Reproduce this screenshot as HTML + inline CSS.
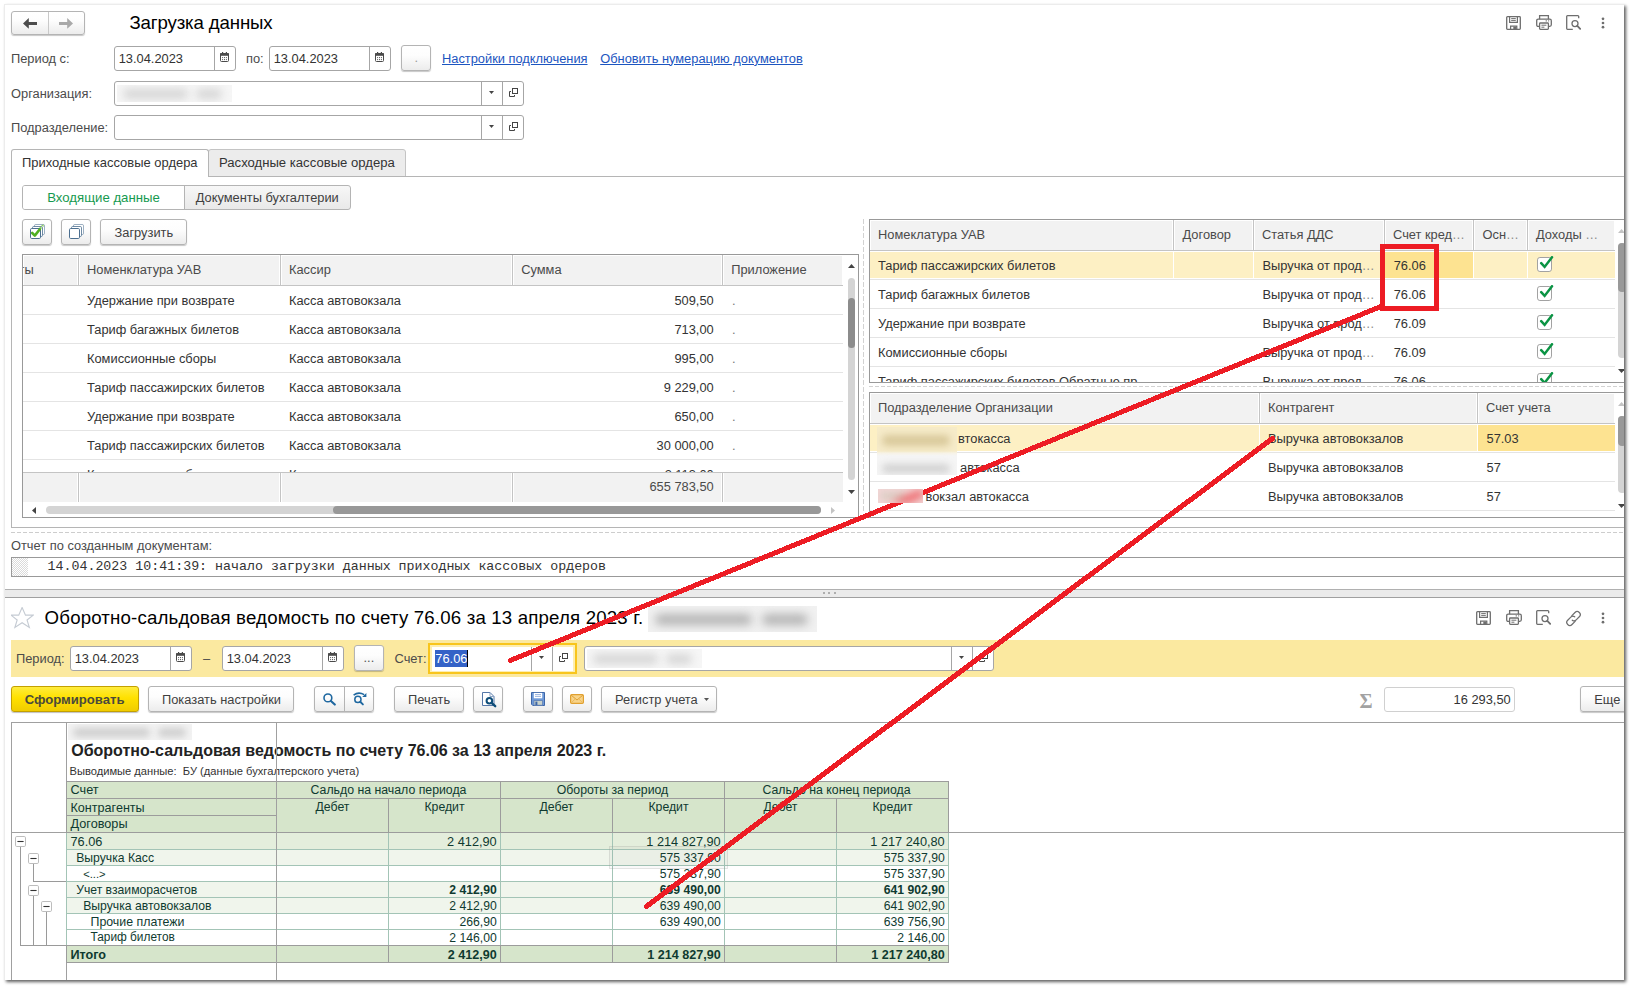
<!DOCTYPE html><html lang='ru'><head><meta charset='utf-8'><title>Загрузка данных</title><style>
html,body{margin:0;padding:0;background:#fff;}
body{width:1633px;height:989px;overflow:hidden;position:relative;font-family:'Liberation Sans',sans-serif;color:#333;}
#frame{position:absolute;left:4px;top:4px;width:1620px;height:976px;background:#fff;box-shadow:2px 2px 3px 0 rgba(0,0,0,.62);border-top:1px solid #ececec;border-left:1px solid #ececec;box-sizing:border-box;}
#c{position:absolute;left:0;top:0;width:1633px;height:989px;clip-path:inset(5px 9px 9px 5px);}
#c div, #c svg, #c2 div, #c2 svg{position:absolute;box-sizing:border-box;}
.t{white-space:pre;}
.inp{background:#fff;border:1px solid #a6a6a6;border-radius:3px;}
.btn{border:1px solid #b4b4b4;border-radius:3px;background:linear-gradient(#fff 0%,#fdfdfd 40%,#ececec 100%);box-shadow:0 1px 1px rgba(0,0,0,.22);}
.vl{width:1px;background:#a6a6a6;}
.hl{height:1px;background:#a6a6a6;}
.lnk{color:#1c55c0;text-decoration:underline;}
.hdr{background:#f2f2f2;}
</style></head><body>
<div id='frame'></div><div id='c'>
<div class='btn' style="left:11px;top:11px;width:74px;height:24px;"></div>
<div style="left:48px;top:12px;width:1px;height:22px;background:#c9c9c9;"></div>
<svg style="left:23px;top:18px;" width="14" height="11" viewBox="0 0 14 11"><path d='M0 5.4L5.8 0V3.9H14V6.9H5.8V10.8Z' fill='#4d4d4d'/></svg>
<svg style="left:59px;top:18px;" width="14" height="11" viewBox="0 0 14 11"><path d='M14 5.4L8.2 0V3.9H0V6.9H8.2V10.8Z' fill='#a9a9a9'/></svg>
<div class='t' style="top:11.13px;line-height:24px;font-size:18.67px;color:#000;letter-spacing:-0.15px;left:129.50px;">Загрузка данных</div>
<svg style="left:1506px;top:16px;" width="15" height="14" viewBox="0 0 15 14"><path d='M1.5 0.7H13.5Q14.3 0.7 14.3 1.5V12.5Q14.3 13.3 13.5 13.3H1.5Q0.7 13.3 0.7 12.5V1.5Q0.7 0.7 1.5 0.7Z' fill='none' stroke='#6e6e6e' stroke-width='1.3'/><path d='M3.6 0.7V6.4H11.4V0.7' fill='none' stroke='#6e6e6e' stroke-width='1.2'/><path d='M5.2 2.6H9.8M5.2 4.4H9.8' stroke='#6e6e6e' stroke-width='1'/><path d='M4.6 13.3V10.2H10.8V13.3' fill='none' stroke='#6e6e6e' stroke-width='1.2'/><rect x='7.3' y='10.6' width='3.2' height='2.7' fill='#6e6e6e'/></svg>
<svg style="left:1536px;top:15px;" width="16" height="15" viewBox="0 0 16 15"><path d='M3.6 4.2V0.7H12.4V4.2' fill='none' stroke='#6e6e6e' stroke-width='1.3'/><path d='M3.6 11.3H2.2Q0.7 11.3 0.7 9.8V5.7Q0.7 4.2 2.2 4.2H13.8Q15.3 4.2 15.3 5.7V9.8Q15.3 11.3 13.8 11.3H12.4' fill='none' stroke='#6e6e6e' stroke-width='1.3'/><rect x='3.6' y='8' width='8.8' height='6.3' rx='0.8' fill='#fff' stroke='#6e6e6e' stroke-width='1.3'/><path d='M5.4 10.2H10.4M5.4 12.2H8.4' stroke='#6e6e6e' stroke-width='1'/><path d='M9.6 5.9H11M12 5.9H13.2' stroke='#6e6e6e' stroke-width='1'/></svg>
<svg style="left:1566px;top:15px;" width="15" height="15" viewBox="0 0 15 15"><path d='M12.7 3.3V1.5Q12.7 0.7 11.9 0.7H1.5Q0.7 0.7 0.7 1.5V13.5Q0.7 14.3 1.5 14.3H6.8' fill='none' stroke='#6e6e6e' stroke-width='1.3'/><circle cx='9' cy='8.6' r='3' fill='none' stroke='#6e6e6e' stroke-width='1.3'/><path d='M11.3 10.9L14.2 13.8' stroke='#6e6e6e' stroke-width='1.8' stroke-linecap='round'/></svg>
<svg style="left:1601.4px;top:16.6px;" width="4" height="12" viewBox="0 0 4 12"><circle cx='2' cy='1.8' r='1.35' fill='#6e6e6e'/><circle cx='2' cy='6' r='1.35' fill='#6e6e6e'/><circle cx='2' cy='10.2' r='1.35' fill='#6e6e6e'/></svg>
<div class='t' style="top:49.65px;line-height:17px;font-size:12.85px;color:#4b4b4b;left:11.00px;">Период с:</div>
<div class='inp' style="left:114px;top:46px;width:122px;height:25px;"></div>
<div class='vl' style="left:214px;top:47px;width:1px;height:23px;"></div>
<svg style="left:220px;top:52px;" width="9" height="10" viewBox="0 0 9 10"><rect x='0.5' y='1.5' width='8' height='8' rx='1' fill='#fff' stroke='#4a4a4a'/><rect x='0' y='1.2' width='9' height='2.6' fill='#4a4a4a'/><rect x='2' y='0' width='1.2' height='2' fill='#4a4a4a'/><rect x='5.8' y='0' width='1.2' height='2' fill='#4a4a4a'/><circle cx='2.6' cy='5.6' r='0.55' fill='#4a4a4a'/><circle cx='2.6' cy='7.6' r='0.55' fill='#4a4a4a'/><circle cx='4.5' cy='5.6' r='0.55' fill='#4a4a4a'/><circle cx='4.5' cy='7.6' r='0.55' fill='#4a4a4a'/><circle cx='6.4' cy='5.6' r='0.55' fill='#4a4a4a'/><circle cx='6.4' cy='7.6' r='0.55' fill='#4a4a4a'/></svg>
<div class='t' style="top:49.65px;line-height:17px;font-size:12.85px;left:118.70px;">13.04.2023</div>
<div class='t' style="top:49.65px;line-height:17px;font-size:12.85px;color:#4b4b4b;left:246.00px;">по:</div>
<div class='inp' style="left:269px;top:46px;width:122px;height:25px;"></div>
<div class='vl' style="left:369px;top:47px;width:1px;height:23px;"></div>
<svg style="left:375px;top:52px;" width="9" height="10" viewBox="0 0 9 10"><rect x='0.5' y='1.5' width='8' height='8' rx='1' fill='#fff' stroke='#4a4a4a'/><rect x='0' y='1.2' width='9' height='2.6' fill='#4a4a4a'/><rect x='2' y='0' width='1.2' height='2' fill='#4a4a4a'/><rect x='5.8' y='0' width='1.2' height='2' fill='#4a4a4a'/><circle cx='2.6' cy='5.6' r='0.55' fill='#4a4a4a'/><circle cx='2.6' cy='7.6' r='0.55' fill='#4a4a4a'/><circle cx='4.5' cy='5.6' r='0.55' fill='#4a4a4a'/><circle cx='4.5' cy='7.6' r='0.55' fill='#4a4a4a'/><circle cx='6.4' cy='5.6' r='0.55' fill='#4a4a4a'/><circle cx='6.4' cy='7.6' r='0.55' fill='#4a4a4a'/></svg>
<div class='t' style="top:49.65px;line-height:17px;font-size:12.85px;left:273.70px;">13.04.2023</div>
<div class='btn' style="left:401px;top:45px;width:30px;height:26px;"></div>
<div class='t' style="top:49.05px;line-height:17px;font-size:12.85px;color:#9a9a9a;left:414.50px;">.</div>
<div class='t lnk' style="top:49.65px;line-height:17px;font-size:12.85px;color:#1c55c0;left:442.00px;">Настройки подключения</div>
<div class='t lnk' style="top:49.65px;line-height:17px;font-size:12.85px;color:#1c55c0;left:600.20px;">Обновить нумерацию документов</div>
<div class='t' style="top:85.05px;line-height:17px;font-size:12.85px;color:#4b4b4b;left:11.00px;">Организация:</div>
<div class='inp' style="left:114px;top:81px;width:410px;height:25px;"></div>
<div class='vl' style="left:481px;top:82px;width:1px;height:23px;"></div>
<div class='vl' style="left:502px;top:82px;width:1px;height:23px;"></div>
<svg style="left:489px;top:91px;" width="5" height="3" viewBox="0 0 5 3"><path d='M0 0H5L2.5 3Z' fill='#444'/></svg>
<svg style="left:509px;top:88px;" width="9" height="9" viewBox="0 0 9 9"><rect x='3.5' y='0.5' width='5' height='5' fill='none' stroke='#444'/><path d='M2 3.5H0.5V8.5H5.5V7' fill='none' stroke='#444'/></svg>
<div style='left:117px;top:85px;width:115px;height:17px;overflow:hidden;background:#f6f6f6;'><div style='left:6px;top:3.5px;width:65px;height:10px;background:#d6d6d6;filter:blur(4px);border-radius:5.0px;'></div><div style='left:79px;top:3.5px;width:26px;height:10px;background:#d6d6d6;filter:blur(4px);border-radius:5.0px;'></div></div>
<div class='t' style="top:119.05px;line-height:17px;font-size:12.85px;color:#4b4b4b;left:11.00px;">Подразделение:</div>
<div class='inp' style="left:114px;top:115px;width:410px;height:25px;"></div>
<div class='vl' style="left:481px;top:116px;width:1px;height:23px;"></div>
<div class='vl' style="left:502px;top:116px;width:1px;height:23px;"></div>
<svg style="left:489px;top:125px;" width="5" height="3" viewBox="0 0 5 3"><path d='M0 0H5L2.5 3Z' fill='#444'/></svg>
<svg style="left:509px;top:122px;" width="9" height="9" viewBox="0 0 9 9"><rect x='3.5' y='0.5' width='5' height='5' fill='none' stroke='#444'/><path d='M2 3.5H0.5V8.5H5.5V7' fill='none' stroke='#444'/></svg>
<div style="left:208px;top:149px;width:198px;height:28px;background:#ececec;border:1px solid #c4c4c4;border-radius:3px 3px 0 0;"></div>
<div style="left:11px;top:176px;width:1613px;height:1px;background:#b5b5b5;"></div>
<div style="left:11px;top:149px;width:198px;height:28px;background:#fff;border:1px solid #b5b5b5;border-bottom:none;border-radius:3px 3px 0 0;"></div>
<div style="left:11px;top:176px;width:1px;height:352px;background:#b5b5b5;"></div>
<div style="left:11px;top:527px;width:1613px;height:1px;background:#b5b5b5;"></div>
<div class='t' style="top:153.81px;line-height:17px;font-size:12.96px;left:22.00px;">Приходные кассовые ордера</div>
<div class='t' style="top:153.75px;line-height:17px;font-size:13.12px;left:219.00px;">Расходные кассовые ордера</div>
<div style="left:22px;top:185px;width:329px;height:25px;background:linear-gradient(#f7f7f7,#e9e9e9);border:1px solid #b4b4b4;border-radius:3px;"></div>
<div style="left:23px;top:186px;width:161px;height:23px;background:#fff;border-radius:2px 0 0 2px;"></div>
<div style="left:184px;top:185px;width:1px;height:25px;background:#b4b4b4;"></div>
<div class='t' style="top:188.93px;line-height:17px;font-size:13.2px;color:#159a4f;left:47.20px;">Входящие данные</div>
<div class='t' style="top:189.05px;line-height:17px;font-size:12.85px;color:#3f3f3f;left:195.70px;">Документы бухгалтерии</div>
<div class='btn' style="left:22px;top:219px;width:30px;height:26px;"></div>
<svg style="left:30px;top:224px;" width="15" height="15" viewBox="0 0 15 15"><rect x='4.5' y='0.5' width='10' height='10' rx='1.2' fill='#fff' stroke='#4c6f90' stroke-opacity='0.55'/><rect x='2.5' y='2.5' width='10' height='10' rx='1.2' fill='#fff' stroke='#4c6f90' stroke-opacity='0.8'/><rect x='0.5' y='4.5' width='10' height='10' rx='1.2' fill='#fff' stroke='#4c6f90' stroke-opacity='1'/><path d='M11 1.2l2.6 -0.6v2.4zM9.2 3.2l2.4-.6v2.6z' fill='#7cc84e' opacity='.85'/><path d='M2.2 9L4.8 11.6L9.8 5.2' fill='none' stroke='#50b022' stroke-width='2.6' stroke-linecap='round' stroke-linejoin='round'/></svg>
<div class='btn' style="left:61px;top:219px;width:30px;height:26px;"></div>
<svg style="left:69px;top:224px;" width="15" height="15" viewBox="0 0 15 15"><rect x='4.5' y='0.5' width='10' height='10' rx='1.2' fill='#fff' stroke='#4c6f90' stroke-opacity='0.55'/><rect x='2.5' y='2.5' width='10' height='10' rx='1.2' fill='#fff' stroke='#4c6f90' stroke-opacity='0.8'/><rect x='0.5' y='4.5' width='10' height='10' rx='1.2' fill='#fff' stroke='#4c6f90' stroke-opacity='1'/></svg>
<div class='btn' style="left:100px;top:219px;width:87px;height:26px;"></div>
<div class='t' style="top:223.65px;line-height:17px;font-size:12.85px;color:#3f3f3f;left:114.50px;">Загрузить</div>
<div style="left:22px;top:254px;width:837px;height:264px;border:1px solid #999;background:#fff;"></div>
<div style="left:23px;top:255px;width:820px;height:30px;background:#f2f2f2;border:1px solid #fff;border-bottom:none;"></div>
<div style="left:23px;top:285px;width:820px;height:1px;background:#c4c4c4;"></div>
<div style="left:77px;top:255px;width:3px;height:30px;background:#fff;"></div>
<div style="left:78px;top:255px;width:1px;height:31px;background:#c4c4c4;"></div>
<div style="left:279px;top:255px;width:3px;height:30px;background:#fff;"></div>
<div style="left:280px;top:255px;width:1px;height:31px;background:#c4c4c4;"></div>
<div style="left:511px;top:255px;width:3px;height:30px;background:#fff;"></div>
<div style="left:512px;top:255px;width:1px;height:31px;background:#c4c4c4;"></div>
<div style="left:721px;top:255px;width:3px;height:30px;background:#fff;"></div>
<div style="left:722px;top:255px;width:1px;height:31px;background:#c4c4c4;"></div>
<div style='left:23px;top:256px;width:50px;height:28px;overflow:hidden;'><div class='t' style='left:-4.5px;top:4.7px;line-height:17px;font-size:12.85px;color:#4a4a4a;'>ты</div></div>
<div class='t' style="top:260.55px;line-height:17px;font-size:12.85px;color:#4a4a4a;left:87.00px;">Номенклатура УАВ</div>
<div class='t' style="top:260.55px;line-height:17px;font-size:12.85px;color:#4a4a4a;left:289.00px;">Кассир</div>
<div class='t' style="top:260.55px;line-height:17px;font-size:12.85px;color:#4a4a4a;left:521.20px;">Сумма</div>
<div class='t' style="top:260.55px;line-height:17px;font-size:12.85px;color:#4a4a4a;left:731.20px;">Приложение</div>
<div style='left:23px;top:286px;width:820px;height:186px;overflow:hidden;'>
<div style='left:0;top:28px;width:820px;height:1px;background:#e4e4e4;'></div>
<div class='t' style='left:64.00px;top:5.65px;line-height:17px;font-size:12.85px;'>Удержание при возврате</div>
<div class='t' style='left:266.00px;top:5.65px;line-height:17px;font-size:12.85px;'>Касса автовокзала</div>
<div class='t' style='right:129.30px;top:5.65px;line-height:17px;font-size:12.85px;'>509,50</div>
<div class='t' style='left:709.00px;top:5.65px;line-height:17px;font-size:12.85px;'><span style='color:#777'>.</span></div>
<div style='left:0;top:57px;width:820px;height:1px;background:#e4e4e4;'></div>
<div class='t' style='left:64.00px;top:34.65px;line-height:17px;font-size:12.85px;'>Тариф багажных билетов</div>
<div class='t' style='left:266.00px;top:34.65px;line-height:17px;font-size:12.85px;'>Касса автовокзала</div>
<div class='t' style='right:129.30px;top:34.65px;line-height:17px;font-size:12.85px;'>713,00</div>
<div class='t' style='left:709.00px;top:34.65px;line-height:17px;font-size:12.85px;'><span style='color:#777'>.</span></div>
<div style='left:0;top:86px;width:820px;height:1px;background:#e4e4e4;'></div>
<div class='t' style='left:64.00px;top:63.65px;line-height:17px;font-size:12.85px;'>Комиссионные сборы</div>
<div class='t' style='left:266.00px;top:63.65px;line-height:17px;font-size:12.85px;'>Касса автовокзала</div>
<div class='t' style='right:129.30px;top:63.65px;line-height:17px;font-size:12.85px;'>995,00</div>
<div class='t' style='left:709.00px;top:63.65px;line-height:17px;font-size:12.85px;'><span style='color:#777'>.</span></div>
<div style='left:0;top:115px;width:820px;height:1px;background:#e4e4e4;'></div>
<div class='t' style='left:64.00px;top:92.65px;line-height:17px;font-size:12.85px;'>Тариф пассажирских билетов</div>
<div class='t' style='left:266.00px;top:92.65px;line-height:17px;font-size:12.85px;'>Касса автовокзала</div>
<div class='t' style='right:129.30px;top:92.65px;line-height:17px;font-size:12.85px;'>9 229,00</div>
<div class='t' style='left:709.00px;top:92.65px;line-height:17px;font-size:12.85px;'><span style='color:#777'>.</span></div>
<div style='left:0;top:144px;width:820px;height:1px;background:#e4e4e4;'></div>
<div class='t' style='left:64.00px;top:121.65px;line-height:17px;font-size:12.85px;'>Удержание при возврате</div>
<div class='t' style='left:266.00px;top:121.65px;line-height:17px;font-size:12.85px;'>Касса автовокзала</div>
<div class='t' style='right:129.30px;top:121.65px;line-height:17px;font-size:12.85px;'>650,00</div>
<div class='t' style='left:709.00px;top:121.65px;line-height:17px;font-size:12.85px;'><span style='color:#777'>.</span></div>
<div style='left:0;top:173px;width:820px;height:1px;background:#e4e4e4;'></div>
<div class='t' style='left:64.00px;top:150.65px;line-height:17px;font-size:12.85px;'>Тариф пассажирских билетов</div>
<div class='t' style='left:266.00px;top:150.65px;line-height:17px;font-size:12.85px;'>Касса автовокзала</div>
<div class='t' style='right:129.30px;top:150.65px;line-height:17px;font-size:12.85px;'>30 000,00</div>
<div class='t' style='left:709.00px;top:150.65px;line-height:17px;font-size:12.85px;'><span style='color:#777'>.</span></div>
<div style='left:0;top:202px;width:820px;height:1px;background:#e4e4e4;'></div>
<div class='t' style='left:64.00px;top:179.65px;line-height:17px;font-size:12.85px;'>Комиссионные сборы</div>
<div class='t' style='left:266.00px;top:179.65px;line-height:17px;font-size:12.85px;'>Касса автовокзала</div>
<div class='t' style='right:129.30px;top:179.65px;line-height:17px;font-size:12.85px;'>2 113,00</div>
<div class='t' style='left:709.00px;top:179.65px;line-height:17px;font-size:12.85px;'><span style='color:#777'>.</span></div>
</div>
<div style="left:23px;top:472px;width:820px;height:1px;background:#c4c4c4;"></div>
<div style="left:23px;top:473px;width:820px;height:29px;background:#f2f2f2;"></div>
<div style="left:77px;top:473px;width:3px;height:29px;background:#fff;"></div>
<div style="left:78px;top:473px;width:1px;height:29px;background:#c4c4c4;"></div>
<div style="left:279px;top:473px;width:3px;height:29px;background:#fff;"></div>
<div style="left:280px;top:473px;width:1px;height:29px;background:#c4c4c4;"></div>
<div style="left:511px;top:473px;width:3px;height:29px;background:#fff;"></div>
<div style="left:512px;top:473px;width:1px;height:29px;background:#c4c4c4;"></div>
<div style="left:721px;top:473px;width:3px;height:29px;background:#fff;"></div>
<div style="left:722px;top:473px;width:1px;height:29px;background:#c4c4c4;"></div>
<div class='t' style="top:478.05px;line-height:17px;font-size:12.85px;color:#4a4a4a;right:919.30px;">655 783,50</div>
<div style="left:46px;top:506px;width:775px;height:8px;background:#d4d4d4;border-radius:4px;"></div>
<div style="left:333px;top:506px;width:488px;height:8px;background:#989898;border-radius:4px;"></div>
<svg style="left:32px;top:507px;" width="4" height="7" viewBox="0 0 4 7"><path d='M4 0V7L0 3.5Z' fill='#444'/></svg>
<svg style="left:831px;top:507px;" width="4" height="7" viewBox="0 0 4 7"><path d='M0 0V7L4 3.5Z' fill='#c4c4c4'/></svg>
<div style="left:848px;top:278px;width:7px;height:202px;background:#d4d4d4;border-radius:4px;"></div>
<div style="left:848px;top:298px;width:7px;height:50px;background:#8c8c8c;border-radius:4px;"></div>
<svg style="left:848px;top:264px;" width="7" height="4" viewBox="0 0 7 4"><path d='M0 4H7L3.5 0Z' fill='#444'/></svg>
<svg style="left:848px;top:490px;" width="7" height="4" viewBox="0 0 7 4"><path d='M0 0H7L3.5 4Z' fill='#444'/></svg>
<div style="left:863px;top:219px;width:1px;height:293px;background:repeating-linear-gradient(#d2d2d2 0 5px,#fff 5px 7px);"></div>
<div style="left:869px;top:386px;width:760px;height:1px;background:repeating-linear-gradient(90deg,#d2d2d2 0 4px,#fff 4px 6px);"></div>
<div style="left:11px;top:532px;width:1613px;height:1px;background:repeating-linear-gradient(90deg,#cdcdcd 0 4px,#fff 4px 6px);"></div>
<div style="left:869px;top:219px;width:760px;height:164px;border:1px solid #999;background:#fff;"></div>
<div style="left:870px;top:220px;width:745px;height:30px;background:#f2f2f2;border:1px solid #fff;border-bottom:none;"></div>
<div style="left:870px;top:250px;width:745px;height:1px;background:#c4c4c4;"></div>
<div style="left:1172px;top:220px;width:3px;height:30px;background:#fff;"></div>
<div style="left:1173px;top:220px;width:1px;height:31px;background:#c4c4c4;"></div>
<div style="left:1252px;top:220px;width:3px;height:30px;background:#fff;"></div>
<div style="left:1253px;top:220px;width:1px;height:31px;background:#c4c4c4;"></div>
<div style="left:1383px;top:220px;width:3px;height:30px;background:#fff;"></div>
<div style="left:1384px;top:220px;width:1px;height:31px;background:#c4c4c4;"></div>
<div style="left:1472px;top:220px;width:3px;height:30px;background:#fff;"></div>
<div style="left:1473px;top:220px;width:1px;height:31px;background:#c4c4c4;"></div>
<div style="left:1526px;top:220px;width:3px;height:30px;background:#fff;"></div>
<div style="left:1527px;top:220px;width:1px;height:31px;background:#c4c4c4;"></div>
<div class='t' style="top:225.55px;line-height:17px;font-size:12.85px;color:#4a4a4a;left:878.00px;">Номеклатура УАВ</div>
<div class='t' style="top:225.55px;line-height:17px;font-size:12.85px;color:#4a4a4a;left:1182.50px;">Договор</div>
<div class='t' style="top:225.55px;line-height:17px;font-size:12.85px;color:#4a4a4a;left:1262.00px;">Статья ДДС</div>
<div class='t' style="top:225.55px;line-height:17px;font-size:12.85px;color:#4a4a4a;left:1393.00px;">Счет кред<span style='color:#8c8c8c'>…</span></div>
<div class='t' style="top:225.55px;line-height:17px;font-size:12.85px;color:#4a4a4a;left:1482.50px;">Осн<span style='color:#8c8c8c'>…</span></div>
<div class='t' style="top:225.55px;line-height:17px;font-size:12.85px;color:#4a4a4a;left:1536.00px;">Доходы <span style='color:#8c8c8c'>…</span></div>
<div style='left:870px;top:251px;width:745px;height:131px;overflow:hidden;'>
<div style='left:0;top:1px;width:745px;height:26px;background:#fdf0c4;'></div>
<div style='left:515px;top:1px;width:88px;height:26px;background:#fde391;'></div>
<div style='left:303px;top:0;width:1px;height:29px;background:#fff;'></div>
<div style='left:383px;top:0;width:1px;height:29px;background:#fff;'></div>
<div style='left:514px;top:0;width:1px;height:29px;background:#fff;'></div>
<div style='left:603px;top:0;width:1px;height:29px;background:#fff;'></div>
<div style='left:657px;top:0;width:1px;height:29px;background:#fff;'></div>
<div style='left:0;top:28px;width:745px;height:1px;background:#e4e4e4;'></div>
<div class='t' style='left:8.00px;top:5.65px;line-height:17px;font-size:12.85px;'>Тариф пассажирских билетов</div>
<div class='t' style='left:392.50px;top:5.65px;line-height:17px;font-size:12.85px;'>Выручка от прод<span style='color:#8c8c8c'>…</span></div>
<div class='t' style='left:523.70px;top:5.65px;line-height:17px;font-size:12.85px;'>76.06</div>
<svg style="left:667px;top:5px;" width="17" height="17" viewBox="0 0 17 17"><rect x='0.5' y='1.5' width='14' height='14' rx='2.4' fill='#fff' stroke='#a2a2a2'/><path d='M4.2 7.2L7.6 10.9L15 1.2' fill='none' stroke='#0b9444' stroke-width='2.5' stroke-linecap='round' stroke-linejoin='miter'/></svg>
<div style='left:0;top:57px;width:745px;height:1px;background:#e4e4e4;'></div>
<div class='t' style='left:8.00px;top:34.65px;line-height:17px;font-size:12.85px;'>Тариф багажных билетов</div>
<div class='t' style='left:392.50px;top:34.65px;line-height:17px;font-size:12.85px;'>Выручка от прод<span style='color:#8c8c8c'>…</span></div>
<div class='t' style='left:523.70px;top:34.65px;line-height:17px;font-size:12.85px;'>76.06</div>
<svg style="left:667px;top:34px;" width="17" height="17" viewBox="0 0 17 17"><rect x='0.5' y='1.5' width='14' height='14' rx='2.4' fill='#fff' stroke='#a2a2a2'/><path d='M4.2 7.2L7.6 10.9L15 1.2' fill='none' stroke='#0b9444' stroke-width='2.5' stroke-linecap='round' stroke-linejoin='miter'/></svg>
<div style='left:0;top:86px;width:745px;height:1px;background:#e4e4e4;'></div>
<div class='t' style='left:8.00px;top:63.65px;line-height:17px;font-size:12.85px;'>Удержание при возврате</div>
<div class='t' style='left:392.50px;top:63.65px;line-height:17px;font-size:12.85px;'>Выручка от прод<span style='color:#8c8c8c'>…</span></div>
<div class='t' style='left:523.70px;top:63.65px;line-height:17px;font-size:12.85px;'>76.09</div>
<svg style="left:667px;top:63px;" width="17" height="17" viewBox="0 0 17 17"><rect x='0.5' y='1.5' width='14' height='14' rx='2.4' fill='#fff' stroke='#a2a2a2'/><path d='M4.2 7.2L7.6 10.9L15 1.2' fill='none' stroke='#0b9444' stroke-width='2.5' stroke-linecap='round' stroke-linejoin='miter'/></svg>
<div style='left:0;top:115px;width:745px;height:1px;background:#e4e4e4;'></div>
<div class='t' style='left:8.00px;top:92.65px;line-height:17px;font-size:12.85px;'>Комиссионные сборы</div>
<div class='t' style='left:392.50px;top:92.65px;line-height:17px;font-size:12.85px;'>Выручка от прод<span style='color:#8c8c8c'>…</span></div>
<div class='t' style='left:523.70px;top:92.65px;line-height:17px;font-size:12.85px;'>76.09</div>
<svg style="left:667px;top:92px;" width="17" height="17" viewBox="0 0 17 17"><rect x='0.5' y='1.5' width='14' height='14' rx='2.4' fill='#fff' stroke='#a2a2a2'/><path d='M4.2 7.2L7.6 10.9L15 1.2' fill='none' stroke='#0b9444' stroke-width='2.5' stroke-linecap='round' stroke-linejoin='miter'/></svg>
<div style='left:0;top:144px;width:745px;height:1px;background:#e4e4e4;'></div>
<div class='t' style='left:8.00px;top:121.65px;line-height:17px;font-size:12.85px;'>Тариф пассажирских билетов Обратные пр<span style='color:#8c8c8c'>…</span></div>
<div class='t' style='left:392.50px;top:121.65px;line-height:17px;font-size:12.85px;'>Выручка от прод<span style='color:#8c8c8c'>…</span></div>
<div class='t' style='left:523.70px;top:121.65px;line-height:17px;font-size:12.85px;'>76.06</div>
<svg style="left:667px;top:121px;" width="17" height="17" viewBox="0 0 17 17"><rect x='0.5' y='1.5' width='14' height='14' rx='2.4' fill='#fff' stroke='#a2a2a2'/><path d='M4.2 7.2L7.6 10.9L15 1.2' fill='none' stroke='#0b9444' stroke-width='2.5' stroke-linecap='round' stroke-linejoin='miter'/></svg>
</div>
<div style="left:1618px;top:243px;width:8px;height:115px;background:#d4d4d4;border-radius:4px;"></div>
<div style="left:1618px;top:243px;width:8px;height:49px;background:#999;border-radius:4px;"></div>
<svg style="left:1618px;top:229px;" width="7" height="4" viewBox="0 0 7 4"><path d='M0 4H7L3.5 0Z' fill='#c4c4c4'/></svg>
<svg style="left:1618px;top:369px;" width="7" height="4" viewBox="0 0 7 4"><path d='M0 0H7L3.5 4Z' fill='#444'/></svg>
<div style="left:869px;top:392px;width:760px;height:126px;border:1px solid #999;background:#fff;"></div>
<div style="left:870px;top:393px;width:745px;height:30px;background:#f2f2f2;border:1px solid #fff;border-bottom:none;"></div>
<div style="left:870px;top:423px;width:745px;height:1px;background:#c4c4c4;"></div>
<div style="left:1258px;top:393px;width:3px;height:30px;background:#fff;"></div>
<div style="left:1259px;top:393px;width:1px;height:31px;background:#c4c4c4;"></div>
<div style="left:1476px;top:393px;width:3px;height:30px;background:#fff;"></div>
<div style="left:1477px;top:393px;width:1px;height:31px;background:#c4c4c4;"></div>
<div class='t' style="top:398.55px;line-height:17px;font-size:12.85px;color:#4a4a4a;left:878.00px;">Подразделение Организации</div>
<div class='t' style="top:398.55px;line-height:17px;font-size:12.85px;color:#4a4a4a;left:1268.00px;">Контрагент</div>
<div class='t' style="top:398.55px;line-height:17px;font-size:12.85px;color:#4a4a4a;left:1486.00px;">Счет учета</div>
<div style='left:870px;top:424px;width:745px;height:93px;overflow:hidden;'>
<div style='left:0;top:1px;width:745px;height:26px;background:#fdf0c4;'></div>
<div style='left:608px;top:1px;width:137px;height:26px;background:#fde391;'></div>
<div style='left:389px;top:0;width:1px;height:29px;background:#fff;'></div>
<div style='left:607px;top:0;width:1px;height:29px;background:#fff;'></div>
<div style='left:0;top:28px;width:745px;height:1px;background:#e4e4e4;'></div>
<div class='t' style='left:88.00px;top:5.65px;line-height:17px;font-size:12.85px;'>втокасса</div>
<div class='t' style='left:398.00px;top:5.65px;line-height:17px;font-size:12.85px;'>Выручка автовокзалов</div>
<div class='t' style='left:616.50px;top:5.65px;line-height:17px;font-size:12.85px;'>57.03</div>
<div style='left:0;top:57px;width:745px;height:1px;background:#e4e4e4;'></div>
<div class='t' style='left:90.00px;top:34.65px;line-height:17px;font-size:12.85px;'>автокасса</div>
<div class='t' style='left:398.00px;top:34.65px;line-height:17px;font-size:12.85px;'>Выручка автовокзалов</div>
<div class='t' style='left:616.50px;top:34.65px;line-height:17px;font-size:12.85px;'>57</div>
<div style='left:0;top:86px;width:745px;height:1px;background:#e4e4e4;'></div>
<div class='t' style='left:55.50px;top:63.65px;line-height:17px;font-size:12.85px;'>вокзал автокасса</div>
<div class='t' style='left:398.00px;top:63.65px;line-height:17px;font-size:12.85px;'>Выручка автовокзалов</div>
<div class='t' style='left:616.50px;top:63.65px;line-height:17px;font-size:12.85px;'>57</div>
</div>
<div style="left:1618px;top:416px;width:8px;height:77px;background:#d4d4d4;border-radius:4px;"></div>
<div style="left:1618px;top:416px;width:8px;height:30px;background:#999;border-radius:4px;"></div>
<svg style="left:1618px;top:402px;" width="7" height="4" viewBox="0 0 7 4"><path d='M0 4H7L3.5 0Z' fill='#c4c4c4'/></svg>
<svg style="left:1618px;top:504px;" width="7" height="4" viewBox="0 0 7 4"><path d='M0 0H7L3.5 4Z' fill='#444'/></svg>
<div class='t' style="top:537.05px;line-height:17px;font-size:12.85px;color:#4b4b4b;left:11.00px;">Отчет по созданным документам:</div>
<div style="left:11px;top:557px;width:1620px;height:20px;border:1px solid #999;background:#fff;"></div>
<div style="left:12px;top:558px;width:16px;height:18px;background:repeating-conic-gradient(#dadada 0 25%,#fff 0 50%) 0 0/2px 2px;"></div>
<div class='t' style="top:558.45px;line-height:17px;font-size:13.3px;font-family:'Liberation Mono',monospace;left:47.50px;">14.04.2023 10:41:39: начало загрузки данных приходных кассовых ордеров</div>
<div style="left:5px;top:589px;width:1620px;height:9px;background:#ebebeb;border-top:1px solid #b0b0b0;border-bottom:1px solid #a0a0a0;"></div>
<div style="left:822.5px;top:592.3px;width:2px;height:2px;background:#9a9a9a;border-radius:1px;"></div>
<div style="left:828.0px;top:592.3px;width:2px;height:2px;background:#9a9a9a;border-radius:1px;"></div>
<div style="left:833.5px;top:592.3px;width:2px;height:2px;background:#9a9a9a;border-radius:1px;"></div>
<svg style="left:10.8px;top:607.3px;" width="23.2" height="22" viewBox="0 0 24 23" preserveAspectRatio="none"><polygon points='11.5,0.5 15,8.5 23,8.5 16.6,13.6 19,21.5 11.5,16.5 4,21.5 6.4,13.6 0,8.5 8,8.5' fill='none' stroke='#c5cbd3' stroke-width='1.15' stroke-linejoin='miter'/></svg>
<div class='t' style="top:606.23px;line-height:24px;font-size:18.67px;color:#000;letter-spacing:0.17px;left:44.60px;">Оборотно-сальдовая ведомость по счету 76.06 за 13 апреля 2023 г.</div>
<div style='left:648px;top:606px;width:169px;height:26px;overflow:hidden;background:#f1f1f1;'><div style='left:7px;top:7.5px;width:97px;height:11px;background:#b4b4b4;filter:blur(5px);border-radius:5.5px;'></div><div style='left:114px;top:7.5px;width:46px;height:11px;background:#b4b4b4;filter:blur(5px);border-radius:5.5px;'></div></div>
<svg style="left:1476px;top:611px;" width="15" height="14" viewBox="0 0 15 14"><path d='M1.5 0.7H13.5Q14.3 0.7 14.3 1.5V12.5Q14.3 13.3 13.5 13.3H1.5Q0.7 13.3 0.7 12.5V1.5Q0.7 0.7 1.5 0.7Z' fill='none' stroke='#6e6e6e' stroke-width='1.3'/><path d='M3.6 0.7V6.4H11.4V0.7' fill='none' stroke='#6e6e6e' stroke-width='1.2'/><path d='M5.2 2.6H9.8M5.2 4.4H9.8' stroke='#6e6e6e' stroke-width='1'/><path d='M4.6 13.3V10.2H10.8V13.3' fill='none' stroke='#6e6e6e' stroke-width='1.2'/><rect x='7.3' y='10.6' width='3.2' height='2.7' fill='#6e6e6e'/></svg>
<svg style="left:1506px;top:610px;" width="16" height="15" viewBox="0 0 16 15"><path d='M3.6 4.2V0.7H12.4V4.2' fill='none' stroke='#6e6e6e' stroke-width='1.3'/><path d='M3.6 11.3H2.2Q0.7 11.3 0.7 9.8V5.7Q0.7 4.2 2.2 4.2H13.8Q15.3 4.2 15.3 5.7V9.8Q15.3 11.3 13.8 11.3H12.4' fill='none' stroke='#6e6e6e' stroke-width='1.3'/><rect x='3.6' y='8' width='8.8' height='6.3' rx='0.8' fill='#fff' stroke='#6e6e6e' stroke-width='1.3'/><path d='M5.4 10.2H10.4M5.4 12.2H8.4' stroke='#6e6e6e' stroke-width='1'/><path d='M9.6 5.9H11M12 5.9H13.2' stroke='#6e6e6e' stroke-width='1'/></svg>
<svg style="left:1536px;top:610px;" width="15" height="15" viewBox="0 0 15 15"><path d='M12.7 3.3V1.5Q12.7 0.7 11.9 0.7H1.5Q0.7 0.7 0.7 1.5V13.5Q0.7 14.3 1.5 14.3H6.8' fill='none' stroke='#6e6e6e' stroke-width='1.3'/><circle cx='9' cy='8.6' r='3' fill='none' stroke='#6e6e6e' stroke-width='1.3'/><path d='M11.3 10.9L14.2 13.8' stroke='#6e6e6e' stroke-width='1.8' stroke-linecap='round'/></svg>
<svg style="left:1564.6px;top:609.6px;" width="17" height="17" viewBox="0 0 17 17"><g fill='none' stroke='#6e6e6e' stroke-width='1.25' stroke-linecap='round'><path d='M6.9 5.6L10 2.5a3 3 0 0 1 4.3 4.3L11.2 9.9a3 3 0 0 1 -3.9 0.3'/><path d='M10.1 11.4L7 14.5a3 3 0 0 1 -4.3 -4.3L5.8 7.1a3 3 0 0 1 3.9 -0.3'/></g></svg>
<svg style="left:1601.4px;top:611.5px;" width="4" height="12" viewBox="0 0 4 12"><circle cx='2' cy='1.8' r='1.35' fill='#6e6e6e'/><circle cx='2' cy='6' r='1.35' fill='#6e6e6e'/><circle cx='2' cy='10.2' r='1.35' fill='#6e6e6e'/></svg>
<div style="left:11px;top:640px;width:1613px;height:37px;background:#fbe9a0;"></div>
<div class='t' style="top:650.25px;line-height:17px;font-size:12.85px;color:#4b4b4b;left:16.00px;">Период:</div>
<div class='inp' style="left:70px;top:646px;width:122px;height:25px;"></div>
<div class='vl' style="left:170px;top:647px;width:1px;height:23px;"></div>
<svg style="left:176px;top:652px;" width="9" height="10" viewBox="0 0 9 10"><rect x='0.5' y='1.5' width='8' height='8' rx='1' fill='#fff' stroke='#4a4a4a'/><rect x='0' y='1.2' width='9' height='2.6' fill='#4a4a4a'/><rect x='2' y='0' width='1.2' height='2' fill='#4a4a4a'/><rect x='5.8' y='0' width='1.2' height='2' fill='#4a4a4a'/><circle cx='2.6' cy='5.6' r='0.55' fill='#4a4a4a'/><circle cx='2.6' cy='7.6' r='0.55' fill='#4a4a4a'/><circle cx='4.5' cy='5.6' r='0.55' fill='#4a4a4a'/><circle cx='4.5' cy='7.6' r='0.55' fill='#4a4a4a'/><circle cx='6.4' cy='5.6' r='0.55' fill='#4a4a4a'/><circle cx='6.4' cy='7.6' r='0.55' fill='#4a4a4a'/></svg>
<div class='t' style="top:649.55px;line-height:17px;font-size:12.85px;left:74.70px;">13.04.2023</div>
<div class='t' style="top:650.25px;line-height:17px;font-size:12.85px;color:#4b4b4b;left:203.00px;">–</div>
<div class='inp' style="left:222px;top:646px;width:122px;height:25px;"></div>
<div class='vl' style="left:322px;top:647px;width:1px;height:23px;"></div>
<svg style="left:328px;top:652px;" width="9" height="10" viewBox="0 0 9 10"><rect x='0.5' y='1.5' width='8' height='8' rx='1' fill='#fff' stroke='#4a4a4a'/><rect x='0' y='1.2' width='9' height='2.6' fill='#4a4a4a'/><rect x='2' y='0' width='1.2' height='2' fill='#4a4a4a'/><rect x='5.8' y='0' width='1.2' height='2' fill='#4a4a4a'/><circle cx='2.6' cy='5.6' r='0.55' fill='#4a4a4a'/><circle cx='2.6' cy='7.6' r='0.55' fill='#4a4a4a'/><circle cx='4.5' cy='5.6' r='0.55' fill='#4a4a4a'/><circle cx='4.5' cy='7.6' r='0.55' fill='#4a4a4a'/><circle cx='6.4' cy='5.6' r='0.55' fill='#4a4a4a'/><circle cx='6.4' cy='7.6' r='0.55' fill='#4a4a4a'/></svg>
<div class='t' style="top:649.55px;line-height:17px;font-size:12.85px;left:226.70px;">13.04.2023</div>
<div class='btn' style="left:354px;top:645px;width:30px;height:26px;"></div>
<div class='t' style="top:649.05px;line-height:17px;font-size:12.85px;color:#555;left:363.50px;">...</div>
<div class='t' style="top:650.25px;line-height:17px;font-size:12.85px;color:#4b4b4b;left:394.50px;">Счет:</div>
<div style="left:428px;top:643px;width:149px;height:31px;border:2px solid #f8c51c;background:#fdeeb0;"></div>
<div style="left:432px;top:647px;width:141px;height:24px;background:#fff;"></div>
<div class='vl' style="left:531px;top:647px;width:1px;height:24px;"></div>
<div class='vl' style="left:552px;top:647px;width:1px;height:24px;"></div>
<svg style="left:539px;top:656px;" width="5" height="3" viewBox="0 0 5 3"><path d='M0 0H5L2.5 3Z' fill='#444'/></svg>
<svg style="left:559px;top:653.2px;" width="9" height="9" viewBox="0 0 9 9"><rect x='3.5' y='0.5' width='5' height='5' fill='none' stroke='#444'/><path d='M2 3.5H0.5V8.5H5.5V7' fill='none' stroke='#444'/></svg>
<div style="left:434.5px;top:650px;width:33.5px;height:17px;background:#3462c7;"></div>
<div class='t' style="top:650.25px;line-height:17px;font-size:12.85px;color:#fff;left:435.30px;">76.06</div>
<div style="left:467px;top:650px;width:1px;height:17px;background:#000;"></div>
<div class='inp' style="left:584px;top:646px;width:410px;height:25px;"></div>
<div class='vl' style="left:951px;top:647px;width:1px;height:23px;"></div>
<div class='vl' style="left:972px;top:647px;width:1px;height:23px;"></div>
<svg style="left:959px;top:656px;" width="5" height="3" viewBox="0 0 5 3"><path d='M0 0H5L2.5 3Z' fill='#444'/></svg>
<svg style="left:979px;top:653px;" width="9" height="9" viewBox="0 0 9 9"><rect x='3.5' y='0.5' width='5' height='5' fill='none' stroke='#444'/><path d='M2 3.5H0.5V8.5H5.5V7' fill='none' stroke='#444'/></svg>
<div style='left:587px;top:649px;width:115px;height:19px;overflow:hidden;background:#f6f6f6;'><div style='left:6px;top:4.5px;width:65px;height:10px;background:#d6d6d6;filter:blur(4px);border-radius:5.0px;'></div><div style='left:79px;top:4.5px;width:26px;height:10px;background:#d6d6d6;filter:blur(4px);border-radius:5.0px;'></div></div>
<div style="left:11px;top:686px;width:128px;height:26px;border:1px solid #c3a000;border-radius:3px;background:linear-gradient(#ffec3d 0%,#ffe100 45%,#f0cc00 100%);box-shadow:0 1px 1px rgba(0,0,0,.25);"></div>
<div class='t' style="top:690.96px;line-height:17px;font-size:13.1px;color:#4a4a3c;font-weight:bold;left:24.70px;">Сформировать</div>
<div class='btn' style="left:148px;top:686px;width:146px;height:26px;"></div>
<div class='t' style="top:691.05px;line-height:17px;font-size:12.85px;color:#3f3f3f;left:162.00px;">Показать настройки</div>
<div class='btn' style="left:314px;top:686px;width:60px;height:26px;"></div>
<div style="left:344px;top:687px;width:1px;height:24px;background:#b4b4b4;"></div>
<svg style="left:323px;top:693px;" width="13" height="13" viewBox="0 0 13 13"><circle cx='4.9' cy='4.9' r='3.9' fill='none' stroke='#1f68a0' stroke-width='1.6'/><path d='M7.9 7.9L11.8 11.6' stroke='#1f68a0' stroke-width='2.1' stroke-linecap='round'/></svg>
<svg style="left:353px;top:692px;" width="14" height="14" viewBox="0 0 14 14"><circle cx='4.9' cy='7.4' r='3.1' fill='none' stroke='#1f68a0' stroke-width='1.5'/><path d='M7.2 9.8L9.9 12.4' stroke='#1f68a0' stroke-width='1.9' stroke-linecap='round'/><path d='M0.6 3.1Q5.5 -0.6 11.2 2.6' fill='none' stroke='#1f68a0' stroke-width='1.5'/><path d='M13.4 0.9V5.1H9.2Z' fill='#1f68a0'/></svg>
<div class='btn' style="left:394px;top:686px;width:70px;height:26px;"></div>
<div class='t' style="top:691.05px;line-height:17px;font-size:12.85px;color:#3f3f3f;left:408.00px;">Печать</div>
<div class='btn' style="left:473px;top:686px;width:30px;height:26px;"></div>
<svg style="left:482px;top:692px;" width="15" height="16" viewBox="0 0 15 16"><path d='M0.5 0.5H8L12 4.5V13.5H0.5Z' fill='#fff' stroke='#5577a8'/><path d='M8 0.5V4.5H12' fill='none' stroke='#8aa3c4'/><circle cx='7.4' cy='8.8' r='2.8' fill='#fff' stroke='#0e4d78' stroke-width='2'/><path d='M9.8 11.2L13.2 14.2' stroke='#0e4d78' stroke-width='2.4' stroke-linecap='round'/></svg>
<div class='btn' style="left:523px;top:686px;width:30px;height:26px;"></div>
<svg style="left:531px;top:692px;" width="14" height="14" viewBox="0 0 14 14"><path d='M0.5 0.5H13.5V13.5H1.8L0.5 12.2Z' fill='#6f9ad8' stroke='#3d66a8'/><rect x='2.8' y='0.9' width='8.4' height='5.4' fill='#fff'/><path d='M4 2.6H10M4 4.4H10' stroke='#9bb6df' stroke-width='1'/><rect x='3' y='8.6' width='8.6' height='4.6' fill='#c9d2cb' stroke='#5f7fb5' stroke-width='.8'/><rect x='4.4' y='9.6' width='2' height='3.4' fill='#3d66a8'/></svg>
<div class='btn' style="left:562px;top:686px;width:30px;height:26px;"></div>
<svg style="left:570px;top:694px;" width="14" height="10" viewBox="0 0 14 10"><rect x='0.6' y='0.6' width='12.8' height='8.8' rx='1.2' fill='#f8d48a' stroke='#e0a030' stroke-width='1.2'/><path d='M1.2 1.2L7 6L12.8 1.2' fill='none' stroke='#e0a030' stroke-width='1'/><path d='M1.2 8.8L5.4 4.8M12.8 8.8L8.6 4.8' fill='none' stroke='#eab658' stroke-width='.9'/></svg>
<div class='btn' style="left:601px;top:686px;width:116px;height:26px;"></div>
<div class='t' style="top:691.05px;line-height:17px;font-size:12.85px;color:#3f3f3f;left:615.00px;">Регистр учета</div>
<svg style="left:704px;top:698px;" width="5" height="3" viewBox="0 0 5 3"><path d='M0 0H5L2.5 3Z' fill='#555'/></svg>
<div class='t' style="top:688.17px;line-height:26px;font-size:20px;color:#a2a2a2;font-weight:bold;left:1359.50px;font-family:'Liberation Serif',serif;">Σ</div>
<div style="left:1384px;top:687px;width:131px;height:25px;border:1px solid #d0d0d0;border-radius:3px;background:#fff;"></div>
<div class='t' style="top:691.05px;line-height:17px;font-size:12.85px;right:122.30px;">16 293,50</div>
<div class='btn' style="left:1580px;top:686px;width:60px;height:26px;"></div>
<div class='t' style="top:691.05px;line-height:17px;font-size:12.85px;color:#3f3f3f;left:1594.20px;">Еще</div>
<div style="left:11px;top:722px;width:1613px;height:1px;background:#a0a0a0;"></div>
<div style="left:11px;top:722px;width:1px;height:258px;background:#a0a0a0;"></div>
<div style="left:66px;top:722px;width:1px;height:258px;background:#a0a0a0;"></div>
<div style="left:11px;top:832px;width:1613px;height:1px;background:#a0a0a0;"></div>
<div style='left:68px;top:724px;width:124px;height:16px;overflow:hidden;background:#f3f3f3;'><div style='left:5px;top:3.5px;width:77px;height:9px;background:#cecece;filter:blur(3.5px);border-radius:4.5px;'></div><div style='left:90px;top:3.5px;width:28px;height:9px;background:#cecece;filter:blur(3.5px);border-radius:4.5px;'></div></div>
<div class='t' style="top:740.26px;line-height:21px;font-size:16px;color:#222;font-weight:bold;left:71.20px;">Оборотно-сальдовая ведомость по счету 76.06 за 13 апреля 2023 г.</div>
<div class='t' style="top:764.14px;line-height:14px;font-size:11.15px;left:69.50px;">Выводимые данные:  БУ (данные бухгалтерского учета)</div>
<div style="left:66px;top:781px;width:211px;height:18px;background:#d6e5cb;border:1px solid #9c9c9c;"></div>
<div style="left:66px;top:798px;width:211px;height:18px;background:#d6e5cb;border:1px solid #9c9c9c;"></div>
<div style="left:66px;top:815px;width:211px;height:18px;background:#d6e5cb;border:1px solid #9c9c9c;"></div>
<div style="left:276px;top:781px;width:225px;height:18px;background:#d6e5cb;border:1px solid #9c9c9c;"></div>
<div style="left:276px;top:798px;width:113px;height:35px;background:#d6e5cb;border:1px solid #9c9c9c;"></div>
<div style="left:388px;top:798px;width:113px;height:35px;background:#d6e5cb;border:1px solid #9c9c9c;"></div>
<div class='t' style="top:781.74px;line-height:16px;font-size:12.3px;color:#0f3a30;left:276.00px;width:225px;text-align:center;">Сальдо на начало периода</div>
<div class='t' style="top:798.64px;line-height:16px;font-size:12.3px;color:#0f3a30;left:276.00px;width:113px;text-align:center;">Дебет</div>
<div class='t' style="top:798.64px;line-height:16px;font-size:12.3px;color:#0f3a30;left:388.00px;width:113px;text-align:center;">Кредит</div>
<div style="left:500px;top:781px;width:225px;height:18px;background:#d6e5cb;border:1px solid #9c9c9c;"></div>
<div style="left:500px;top:798px;width:113px;height:35px;background:#d6e5cb;border:1px solid #9c9c9c;"></div>
<div style="left:612px;top:798px;width:113px;height:35px;background:#d6e5cb;border:1px solid #9c9c9c;"></div>
<div class='t' style="top:781.74px;line-height:16px;font-size:12.3px;color:#0f3a30;left:500.00px;width:225px;text-align:center;">Обороты за период</div>
<div class='t' style="top:798.64px;line-height:16px;font-size:12.3px;color:#0f3a30;left:500.00px;width:113px;text-align:center;">Дебет</div>
<div class='t' style="top:798.64px;line-height:16px;font-size:12.3px;color:#0f3a30;left:612.00px;width:113px;text-align:center;">Кредит</div>
<div style="left:724px;top:781px;width:225px;height:18px;background:#d6e5cb;border:1px solid #9c9c9c;"></div>
<div style="left:724px;top:798px;width:113px;height:35px;background:#d6e5cb;border:1px solid #9c9c9c;"></div>
<div style="left:836px;top:798px;width:113px;height:35px;background:#d6e5cb;border:1px solid #9c9c9c;"></div>
<div class='t' style="top:781.74px;line-height:16px;font-size:12.3px;color:#0f3a30;left:724.00px;width:225px;text-align:center;">Сальдо на конец периода</div>
<div class='t' style="top:798.64px;line-height:16px;font-size:12.3px;color:#0f3a30;left:724.00px;width:113px;text-align:center;">Дебет</div>
<div class='t' style="top:798.64px;line-height:16px;font-size:12.3px;color:#0f3a30;left:836.00px;width:113px;text-align:center;">Кредит</div>
<div class='t' style="top:782.00px;line-height:17px;font-size:12.7px;color:#0f3a30;left:70.50px;">Счет</div>
<div class='t' style="top:799.53px;line-height:16px;font-size:12.6px;color:#0f3a30;left:70.50px;">Контрагенты</div>
<div class='t' style="top:816.00px;line-height:17px;font-size:12.7px;color:#0f3a30;left:70.50px;">Договоры</div>
<div style="left:66px;top:832px;width:211px;height:18px;background:#e4eedc;border:1px solid #a3c4b6;"></div>
<div style="left:276px;top:832px;width:113px;height:18px;background:#e4eedc;border:1px solid #a3c4b6;"></div>
<div style="left:388px;top:832px;width:113px;height:18px;background:#e4eedc;border:1px solid #a3c4b6;"></div>
<div style="left:500px;top:832px;width:113px;height:18px;background:#e4eedc;border:1px solid #a3c4b6;"></div>
<div style="left:612px;top:832px;width:113px;height:18px;background:#e4eedc;border:1px solid #a3c4b6;"></div>
<div style="left:724px;top:832px;width:113px;height:18px;background:#e4eedc;border:1px solid #a3c4b6;"></div>
<div style="left:836px;top:832px;width:113px;height:18px;background:#e4eedc;border:1px solid #a3c4b6;"></div>
<div class='t' style="top:832.98px;line-height:17px;font-size:12.75px;color:#0f3a30;left:70.50px;">76.06</div>
<div class='t' style="top:832.98px;line-height:17px;font-size:12.75px;color:#0f3a30;right:1136.30px;">2 412,90</div>
<div class='t' style="top:832.98px;line-height:17px;font-size:12.75px;color:#0f3a30;right:912.30px;">1 214 827,90</div>
<div class='t' style="top:832.98px;line-height:17px;font-size:12.75px;color:#0f3a30;right:688.30px;">1 217 240,80</div>
<div style="left:66px;top:849px;width:211px;height:17px;background:#f0f5ec;border:1px solid #a3c4b6;"></div>
<div style="left:276px;top:849px;width:113px;height:17px;background:#f0f5ec;border:1px solid #a3c4b6;"></div>
<div style="left:388px;top:849px;width:113px;height:17px;background:#f0f5ec;border:1px solid #a3c4b6;"></div>
<div style="left:500px;top:849px;width:113px;height:17px;background:#f0f5ec;border:1px solid #a3c4b6;"></div>
<div style="left:612px;top:849px;width:113px;height:17px;background:#f0f5ec;border:1px solid #a3c4b6;"></div>
<div style="left:724px;top:849px;width:113px;height:17px;background:#f0f5ec;border:1px solid #a3c4b6;"></div>
<div style="left:836px;top:849px;width:113px;height:17px;background:#f0f5ec;border:1px solid #a3c4b6;"></div>
<div class='t' style="top:849.67px;line-height:16px;font-size:12.2px;color:#0f3a30;left:76.20px;">Выручка Касс</div>
<div class='t' style="top:849.67px;line-height:16px;font-size:12.2px;color:#0f3a30;right:912.30px;">575 337,90</div>
<div class='t' style="top:849.67px;line-height:16px;font-size:12.2px;color:#0f3a30;right:688.30px;">575 337,90</div>
<div style="left:66px;top:865px;width:211px;height:17px;background:#fff;border:1px solid #a3c4b6;"></div>
<div style="left:276px;top:865px;width:113px;height:17px;background:#fff;border:1px solid #a3c4b6;"></div>
<div style="left:388px;top:865px;width:113px;height:17px;background:#fff;border:1px solid #a3c4b6;"></div>
<div style="left:500px;top:865px;width:113px;height:17px;background:#fff;border:1px solid #a3c4b6;"></div>
<div style="left:612px;top:865px;width:113px;height:17px;background:#fff;border:1px solid #a3c4b6;"></div>
<div style="left:724px;top:865px;width:113px;height:17px;background:#fff;border:1px solid #a3c4b6;"></div>
<div style="left:836px;top:865px;width:113px;height:17px;background:#fff;border:1px solid #a3c4b6;"></div>
<div class='t' style="top:865.67px;line-height:16px;font-size:12.2px;color:#0f3a30;left:83.20px;"><span style='font-size:11.2px'>&lt;...&gt;</span></div>
<div class='t' style="top:865.67px;line-height:16px;font-size:12.2px;color:#0f3a30;right:912.30px;">575 337,90</div>
<div class='t' style="top:865.67px;line-height:16px;font-size:12.2px;color:#0f3a30;right:688.30px;">575 337,90</div>
<div style="left:66px;top:881px;width:211px;height:17px;background:#f0f5ec;border:1px solid #a3c4b6;"></div>
<div style="left:276px;top:881px;width:113px;height:17px;background:#f0f5ec;border:1px solid #a3c4b6;"></div>
<div style="left:388px;top:881px;width:113px;height:17px;background:#f0f5ec;border:1px solid #a3c4b6;"></div>
<div style="left:500px;top:881px;width:113px;height:17px;background:#f0f5ec;border:1px solid #a3c4b6;"></div>
<div style="left:612px;top:881px;width:113px;height:17px;background:#f0f5ec;border:1px solid #a3c4b6;"></div>
<div style="left:724px;top:881px;width:113px;height:17px;background:#f0f5ec;border:1px solid #a3c4b6;"></div>
<div style="left:836px;top:881px;width:113px;height:17px;background:#f0f5ec;border:1px solid #a3c4b6;"></div>
<div class='t' style="top:881.67px;line-height:16px;font-size:12.2px;color:#0f3a30;left:76.20px;">Учет взаиморасчетов</div>
<div class='t' style="top:881.67px;line-height:16px;font-size:12.2px;color:#0f3a30;right:1136.30px;"><b>2 412,90</b></div>
<div class='t' style="top:881.67px;line-height:16px;font-size:12.2px;color:#0f3a30;right:912.30px;"><b>639 490,00</b></div>
<div class='t' style="top:881.67px;line-height:16px;font-size:12.2px;color:#0f3a30;right:688.30px;"><b>641 902,90</b></div>
<div style="left:66px;top:897px;width:211px;height:17px;background:#f0f5ec;border:1px solid #a3c4b6;"></div>
<div style="left:276px;top:897px;width:113px;height:17px;background:#f0f5ec;border:1px solid #a3c4b6;"></div>
<div style="left:388px;top:897px;width:113px;height:17px;background:#f0f5ec;border:1px solid #a3c4b6;"></div>
<div style="left:500px;top:897px;width:113px;height:17px;background:#f0f5ec;border:1px solid #a3c4b6;"></div>
<div style="left:612px;top:897px;width:113px;height:17px;background:#f0f5ec;border:1px solid #a3c4b6;"></div>
<div style="left:724px;top:897px;width:113px;height:17px;background:#f0f5ec;border:1px solid #a3c4b6;"></div>
<div style="left:836px;top:897px;width:113px;height:17px;background:#f0f5ec;border:1px solid #a3c4b6;"></div>
<div class='t' style="top:897.67px;line-height:16px;font-size:12.2px;color:#0f3a30;left:83.20px;">Выручка автовокзалов</div>
<div class='t' style="top:897.67px;line-height:16px;font-size:12.2px;color:#0f3a30;right:1136.30px;">2 412,90</div>
<div class='t' style="top:897.67px;line-height:16px;font-size:12.2px;color:#0f3a30;right:912.30px;">639 490,00</div>
<div class='t' style="top:897.67px;line-height:16px;font-size:12.2px;color:#0f3a30;right:688.30px;">641 902,90</div>
<div style="left:66px;top:913px;width:211px;height:17px;background:#fff;border:1px solid #a3c4b6;"></div>
<div style="left:276px;top:913px;width:113px;height:17px;background:#fff;border:1px solid #a3c4b6;"></div>
<div style="left:388px;top:913px;width:113px;height:17px;background:#fff;border:1px solid #a3c4b6;"></div>
<div style="left:500px;top:913px;width:113px;height:17px;background:#fff;border:1px solid #a3c4b6;"></div>
<div style="left:612px;top:913px;width:113px;height:17px;background:#fff;border:1px solid #a3c4b6;"></div>
<div style="left:724px;top:913px;width:113px;height:17px;background:#fff;border:1px solid #a3c4b6;"></div>
<div style="left:836px;top:913px;width:113px;height:17px;background:#fff;border:1px solid #a3c4b6;"></div>
<div class='t' style="top:913.61px;line-height:16px;font-size:12.37px;color:#0f3a30;left:90.50px;">Прочие платежи</div>
<div class='t' style="top:913.67px;line-height:16px;font-size:12.2px;color:#0f3a30;right:1136.30px;">266,90</div>
<div class='t' style="top:913.67px;line-height:16px;font-size:12.2px;color:#0f3a30;right:912.30px;">639 490,00</div>
<div class='t' style="top:913.67px;line-height:16px;font-size:12.2px;color:#0f3a30;right:688.30px;">639 756,90</div>
<div style="left:66px;top:929px;width:211px;height:17px;background:#fff;border:1px solid #a3c4b6;"></div>
<div style="left:276px;top:929px;width:113px;height:17px;background:#fff;border:1px solid #a3c4b6;"></div>
<div style="left:388px;top:929px;width:113px;height:17px;background:#fff;border:1px solid #a3c4b6;"></div>
<div style="left:500px;top:929px;width:113px;height:17px;background:#fff;border:1px solid #a3c4b6;"></div>
<div style="left:612px;top:929px;width:113px;height:17px;background:#fff;border:1px solid #a3c4b6;"></div>
<div style="left:724px;top:929px;width:113px;height:17px;background:#fff;border:1px solid #a3c4b6;"></div>
<div style="left:836px;top:929px;width:113px;height:17px;background:#fff;border:1px solid #a3c4b6;"></div>
<div class='t' style="top:930.29px;line-height:15px;font-size:11.86px;color:#0f3a30;left:90.50px;">Тариф билетов</div>
<div class='t' style="top:929.67px;line-height:16px;font-size:12.2px;color:#0f3a30;right:1136.30px;">2 146,00</div>
<div class='t' style="top:929.67px;line-height:16px;font-size:12.2px;color:#0f3a30;right:688.30px;">2 146,00</div>
<div style="left:66px;top:945px;width:211px;height:18px;background:#d6e5cb;border:1px solid #9c9c9c;"></div>
<div style="left:276px;top:945px;width:113px;height:18px;background:#d6e5cb;border:1px solid #9c9c9c;"></div>
<div style="left:388px;top:945px;width:113px;height:18px;background:#d6e5cb;border:1px solid #9c9c9c;"></div>
<div style="left:500px;top:945px;width:113px;height:18px;background:#d6e5cb;border:1px solid #9c9c9c;"></div>
<div style="left:612px;top:945px;width:113px;height:18px;background:#d6e5cb;border:1px solid #9c9c9c;"></div>
<div style="left:724px;top:945px;width:113px;height:18px;background:#d6e5cb;border:1px solid #9c9c9c;"></div>
<div style="left:836px;top:945px;width:113px;height:18px;background:#d6e5cb;border:1px solid #9c9c9c;"></div>
<div class='t' style="top:946.53px;line-height:16px;font-size:12.6px;color:#0f3a30;left:70.50px;"><b>Итого</b></div>
<div class='t' style="top:946.53px;line-height:16px;font-size:12.6px;color:#0f3a30;right:1136.30px;"><b>2 412,90</b></div>
<div class='t' style="top:946.53px;line-height:16px;font-size:12.6px;color:#0f3a30;right:912.30px;"><b>1 214 827,90</b></div>
<div class='t' style="top:946.53px;line-height:16px;font-size:12.6px;color:#0f3a30;right:688.30px;"><b>1 217 240,80</b></div>
<div style="left:66px;top:832px;width:883px;height:1px;background:#9c9c9c;"></div>
<div style="left:66px;top:945px;width:883px;height:1px;background:#9c9c9c;"></div>
<div style="left:276px;top:722px;width:1px;height:258px;background:#a0a0a0;"></div>
<div style="left:609px;top:846px;width:119px;height:23px;border:1px solid rgba(150,150,150,.22);background:rgba(120,120,120,.045);"></div>
<div style="left:20px;top:847px;width:1px;height:99px;background:#9a9a9a;"></div>
<div style="left:20px;top:945px;width:46px;height:1px;background:#9a9a9a;"></div>
<div style="left:33px;top:864px;width:1px;height:18px;background:#9a9a9a;"></div>
<div style="left:33px;top:881px;width:33px;height:1px;background:#9a9a9a;"></div>
<div style="left:33px;top:896px;width:1px;height:50px;background:#9a9a9a;"></div>
<div style="left:46px;top:912px;width:1px;height:34px;background:#9a9a9a;"></div>
<svg style="left:15px;top:836px;" width="11" height="11" viewBox="0 0 11 11"><rect x='0.5' y='0.5' width='10' height='10' rx='1.3' fill='#fff' stroke='#bdbdbd'/><path d='M2.4 5.5H8.6' stroke='#333' stroke-width='1.1'/></svg>
<svg style="left:28px;top:853px;" width="11" height="11" viewBox="0 0 11 11"><rect x='0.5' y='0.5' width='10' height='10' rx='1.3' fill='#fff' stroke='#bdbdbd'/><path d='M2.4 5.5H8.6' stroke='#333' stroke-width='1.1'/></svg>
<svg style="left:28px;top:885px;" width="11" height="11" viewBox="0 0 11 11"><rect x='0.5' y='0.5' width='10' height='10' rx='1.3' fill='#fff' stroke='#bdbdbd'/><path d='M2.4 5.5H8.6' stroke='#333' stroke-width='1.1'/></svg>
<svg style="left:41px;top:901px;" width="11" height="11" viewBox="0 0 11 11"><rect x='0.5' y='0.5' width='10' height='10' rx='1.3' fill='#fff' stroke='#bdbdbd'/><path d='M2.4 5.5H8.6' stroke='#333' stroke-width='1.1'/></svg>
</div>
<svg style='position:absolute;left:0;top:0;' width='1633' height='989' viewBox='0 0 1633 989' shape-rendering='crispEdges'><line x1='510.5' y1='660.4' x2='1381' y2='306.5' stroke='#ed1c24' stroke-width='5.0' stroke-linecap='round'/><line x1='646.5' y1='906.4' x2='1272.6' y2='438.4' stroke='#ed1c24' stroke-width='5.2' stroke-linecap='round'/><rect x='1382.5' y='246.5' width='54' height='62' fill='none' stroke='#ed1c24' stroke-width='5'/></svg>
<div id='c2' style='position:absolute;left:0;top:0;width:1633px;height:989px;'><div style='left:877px;top:427px;width:80px;height:48px;overflow:hidden;background:linear-gradient(#f6ebc9 0,#f6ebc9 24px,#f7f3e6 26px,#f5f5f5 29px,#f5f5f5 48px);'><div style='left:5px;top:8px;width:68px;height:11px;background:#d9c99b;filter:blur(3.5px);border-radius:5px;'></div><div style='left:5px;top:37px;width:68px;height:9px;background:#d2d2d2;filter:blur(3.5px);border-radius:5px;'></div></div><div style='left:878px;top:489px;width:45px;height:14px;overflow:hidden;background:#f2d6d6;'><div style='left:3px;top:3px;width:24px;height:8px;background:#dccfc6;filter:blur(3px);'></div><svg style='left:0;top:0;filter:blur(4px);' width='45' height='14' viewBox='0 0 45 14'><line x1='-12' y1='26.9' x2='60' y2='-2.4' stroke='#ed1c24' stroke-width='6' opacity='.8'/></svg></div></div>
</body></html>
